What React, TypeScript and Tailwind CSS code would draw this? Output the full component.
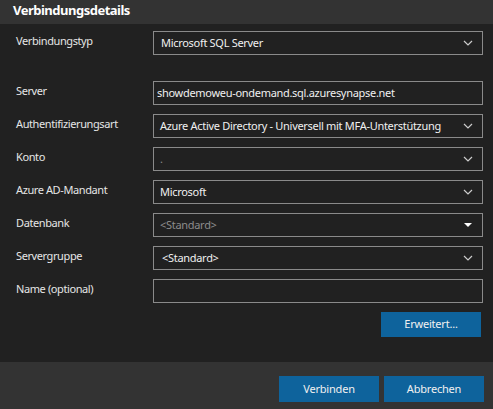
import React from "react";

const font = { fontFamily: '"Segoe UI", "Noto Sans", "Open Sans", sans-serif' };

const Chevron = () => (
  <svg width="10" height="6" viewBox="0 0 10 6" className="shrink-0 text-[#cccccc]">
    <path d="M1 1 L5 5 L9 1" fill="none" stroke="currentColor" strokeWidth="1.2" />
  </svg>
);

const Caret = () => (
  <svg width="10" height="6" viewBox="0 0 10 6" className="shrink-0">
    <path d="M1 1 H9 L5 5 Z" fill="#ffffff" />
  </svg>
);

type RowProps = {
  label: string;
  value?: string;
  muted?: boolean;
  icon?: "chevron" | "caret" | "none";
  indent?: string;
};

const Row = ({ label, value = "", muted, icon = "chevron", indent = "pl-[6px]" }: RowProps) => (
  <div className="flex items-center h-6">
    <div className="w-[153px] shrink-0 pl-4 text-[11px] tracking-[-0.4px] text-[#e6e6e6] whitespace-nowrap -mt-[3px]">
      {label}
    </div>
    <div className="w-[330px] shrink-0 h-6 border border-[#8a8a8a] flex items-center justify-between pr-[9px]">
      <span
        className={`${indent} text-[11px] tracking-[-0.3px] whitespace-nowrap ${
          muted ? "text-[#8c8c8c]" : "text-[#f0f0f0]"
        }`}
      >
        {value}
      </span>
      {icon === "chevron" && <Chevron />}
      {icon === "caret" && <Caret />}
    </div>
  </div>
);

const Button = ({ children }: { children: React.ReactNode }) => (
  <button className="w-[100px] h-[26px] bg-[#0e639c] text-[11px] tracking-[-0.2px] text-[#f0f0f0]">{children}</button>
);

export default function App() {
  return (
    <div className="w-[493px] h-[409px] bg-[#212121] flex flex-col" style={font}>
      <div className="h-6 bg-[#333333] flex items-center pl-[13px]">
        <h1 className="text-[13px] font-bold tracking-[-0.5px] text-white -mt-[3px]">Verbindungsdetails</h1>
      </div>
      <div className="flex-1 flex flex-col pt-[7px]">
        <Row label="Verbindungstyp" value="Microsoft SQL Server" indent="pl-[7px]" />
        <div className="flex flex-col gap-[9px] mt-[26px]">
          <Row label="Server" value="showdemoweu-ondemand.sql.azuresynapse.net" icon="none" indent="pl-[3px]" />
          <Row label="Authentifizierungsart" value="Azure Active Directory - Universell mit MFA-Unterstützung" />
          <Row label="Konto" value="." muted />
          <Row label="Azure AD-Mandant" value="Microsoft" />
          <Row label="Datenbank" value="<Standard>" muted icon="caret" />
          <Row label="Servergruppe" value="<Standard>" indent="pl-[8px]" />
          <Row label="Name (optional)" icon="none" />
        </div>
        <div className="flex justify-end pr-3 mt-[9px]">
          <button className="w-[100px] h-[25px] bg-[#0e639c] text-[11px] tracking-[-0.2px] text-[#f0f0f0]">
            Erweitert...
          </button>
        </div>
      </div>
      <div className="h-[47px] bg-[#333333] flex justify-end gap-[5px] pr-[9px] pt-[14px]">
        <Button>Verbinden</Button>
        <Button>Abbrechen</Button>
      </div>
    </div>
  );
}
